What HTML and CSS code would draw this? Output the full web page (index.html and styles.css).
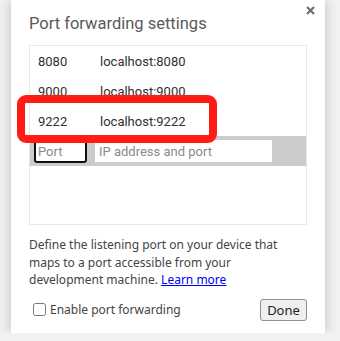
FILE: index.html
```html
<!DOCTYPE html>
<html lang="en">
<head>
    <meta charset="UTF-8">
    <meta name="viewport" content="width=device-width, initial-scale=1.0">
    <title>Port forwarding settings</title>
    <link rel="stylesheet" href="styles.css">
</head>
<body>
    <div class="dialog">
        <button class="close-btn" type="button" aria-label="Close">
            <svg width="9" height="9" viewBox="0 0 9 9">
                <path d="M1 1L8 8M8 1L1 8" stroke="#6b6b6b" stroke-width="2" fill="none"/>
            </svg>
        </button>

        <h1 class="title">Port forwarding settings</h1>

        <div class="rule-list">
            <div class="rule-row">
                <span class="rule-port">8080</span>
                <span class="rule-target">localhost:8080</span>
            </div>
            <div class="rule-row">
                <span class="rule-port">9000</span>
                <span class="rule-target">localhost:9000</span>
            </div>
            <div class="rule-row">
                <span class="rule-port">9222</span>
                <span class="rule-target">localhost:9222</span>
            </div>
            <div class="rule-new">
                <input type="text" class="port-input" placeholder="Port">
                <input type="text" class="address-input" placeholder="IP address and port">
            </div>

            <!-- annotation drawn over the third rule -->
            <div class="highlight"></div>
        </div>

        <p class="description">
            Define the listening port on your device that maps to a port accessible from your
            development machine. <a href="#">Learn more</a>
        </p>

        <div class="footer">
            <label class="enable">
                <input type="checkbox">
                <span>Enable port forwarding</span>
            </label>
            <button type="button" class="done-btn">Done</button>
        </div>
    </div>
</body>
</html>
```

FILE: styles.css
```css
body {
    margin: 0;
    padding: 0;
    background-color: #f2f2f2;
    font-family: 'Noto Sans', sans-serif;
    overflow: hidden;
}

.dialog {
    position: relative;
    margin-left: 11px;
    width: 314px;
    height: 333px;
    padding: 0 18px;
    box-sizing: border-box;
    background: #fff;
    box-shadow: 0 0 12px rgba(0,0,0,0.22);
}

.close-btn {
    position: absolute;
    top: 6px;
    right: 10px;
    width: 9px;
    height: 9px;
    padding: 0;
    border: none;
    background: none;
    display: flex;
}

.title {
    margin: 0 0 9px;
    padding-top: 12px;
    font-family: Roboto, sans-serif;
    font-size: 16.5px;
    font-weight: normal;
    line-height: 24px;
    color: #5a5a5a;
}

.rule-list {
    position: relative;
    height: 180px;
    border: 1px solid #e8e8e8;
    box-sizing: border-box;
    font-family: Roboto, sans-serif;
    font-size: 13px;
    color: #303030;
}

.rule-row {
    display: flex;
    align-items: center;
    height: 30px;
    padding-left: 8px;
}

.rule-port {
    width: 62px;
}

.rule-new {
    display: flex;
    align-items: center;
    gap: 8px;
    height: 30px;
    padding-left: 4px;
    background-color: #cccccc;
}

.rule-new input {
    font-family: Roboto, sans-serif;
    font-size: 13px;
    box-sizing: border-box;
    margin: 0;
    outline: none;
    color: #333;
}

.rule-new input::placeholder {
    color: #8a8a8a;
}

.port-input {
    width: 53px;
    height: 23px;
    padding: 0 2px;
    border: 2px solid #111;
    border-radius: 3px;
    background: #fff;
}

.address-input {
    width: 177px;
    height: 22px;
    padding: 0 4px;
    border: none;
    background: #fff;
}

.highlight {
    position: absolute;
    left: -13px;
    top: 49px;
    width: 200px;
    height: 48px;
    box-sizing: border-box;
    border: 8px solid #ff1c14;
    border-radius: 9px;
    pointer-events: none;
}

.description {
    margin: 11px 0 0;
    font-size: 12px;
    line-height: 17.5px;
    color: #444;
}

.description a {
    color: #0000ee;
}

.footer {
    display: flex;
    justify-content: space-between;
    align-items: center;
    margin-top: 10px;
}

.enable {
    display: flex;
    align-items: center;
    gap: 4px;
    padding-left: 4px;
    font-size: 12px;
    color: #444;
}

.enable input {
    width: 13px;
    height: 13px;
    margin: 0;
}

.done-btn {
    width: 47px;
    height: 22px;
    padding: 0;
    border: 1px solid #8f8f8f;
    border-radius: 3px;
    background-color: #efefef;
    font-family: 'Noto Sans', sans-serif;
    font-size: 13px;
    color: #222;
}
```
